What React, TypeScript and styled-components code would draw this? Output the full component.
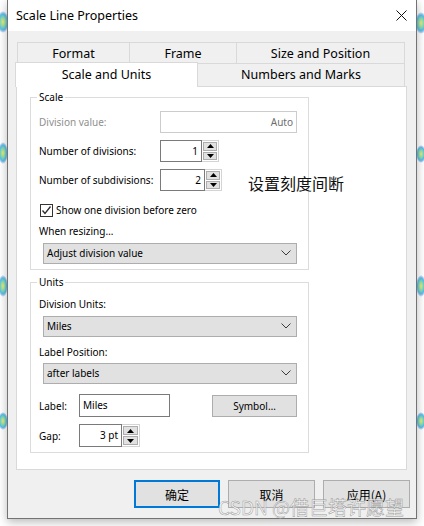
import React from "react";
import styled, { createGlobalStyle } from "styled-components";

const GlobalStyle = createGlobalStyle`
  *, *::before, *::after { box-sizing: border-box; }
  html, body { margin: 0; padding: 0; background: #ffffff; }
  body {
    width: 424px;
    height: 526px;
    overflow: hidden;
    font-family: "Noto Sans", "Noto Sans CJK SC", sans-serif;
    color: #000;
  }
`;

const Page = styled.div`
  position: relative;
  width: 424px;
  height: 526px;
  padding-left: 7px;
`;

const Backdrop = styled.svg`
  position: absolute;
  left: 0;
  top: 0;
  width: 424px;
  height: 526px;
`;

const Window = styled.div`
  position: relative;
  z-index: 1;
  width: 410px;
  height: 519px;
  border: 1px solid #737373;
  border-top: none;
  background: #f0f0f0;
  box-shadow: 0 3px 9px rgba(0, 0, 0, 0.28);
  display: flex;
  flex-direction: column;
`;

const TitleBar = styled.div`
  height: 31px;
  flex: none;
  background: #ffffff;
  display: flex;
  align-items: center;
  justify-content: space-between;
  padding: 0 9px 0 8px;
`;

const Title = styled.span`
  font-size: 12.5px;
  line-height: 16px;
  margin-top: 1px;
`;

const Body = styled.div`
  flex: 1;
  display: flex;
  flex-direction: column;
  padding: 11px 9px 10px 8px;
`;

const TabRow = styled.div<{ $front?: boolean }>`
  display: flex;
  align-items: flex-start;
  height: ${(p) => (p.$front ? 23 : 21)}px;
  padding-left: ${(p) => (p.$front ? 0 : 1)}px;
`;

const Tab = styled.div<{ $w: number; $selected?: boolean; $first?: boolean }>`
  position: relative;
  z-index: ${(p) => (p.$selected ? 2 : 0)};
  width: ${(p) => p.$w}px;
  height: ${(p) => (p.$selected ? 25 : p.$first === undefined ? 23 : 21)}px;
  margin: ${(p) => (p.$selected ? "-1px 0 -1px -1px" : p.$first ? "0" : "0 0 0 -1px")};
  border: 1px solid #d9d9d9;
  border-bottom: none;
  background: ${(p) => (p.$selected ? "#ffffff" : "#f0f0f0")};
  font-size: 12.5px;
  line-height: 16px;
  display: flex;
  align-items: center;
  justify-content: center;
  padding-top: ${(p) => (p.$first === undefined ? 0 : 1)}px;
  padding-bottom: ${(p) => (p.$selected ? 1 : 0)}px;
`;

const Panel = styled.div`
  position: relative;
  height: 384px;
  flex: none;
  border: 1px solid #d9d9d9;
  background: #ffffff;
  padding: 3px 0 0 13px;
  display: flex;
  flex-direction: column;
  gap: 5px;
`;

const Group = styled.fieldset`
  width: 279px;
  margin: 0;
  min-width: 0;
  padding: 0 10px 5px 8px;
  border: 1px solid #dcdcdc;
`;

const Legend = styled.legend`
  font-size: 10px;
  line-height: 14px;
  padding: 0 2px;
  margin-left: -2px;
`;

const GroupBody = styled.div`
  padding-top: 7px;
  display: flex;
  flex-direction: column;
`;

const Row = styled.div<{ $h: number; $mt?: number }>`
  height: ${(p) => p.$h}px;
  margin-top: ${(p) => p.$mt ?? 0}px;
  display: flex;
  align-items: center;
`;

const Label = styled.span<{ $w?: number; $disabled?: boolean }>`
  flex: none;
  width: ${(p) => (p.$w ? `${p.$w}px` : "auto")};
  font-size: 10px;
  line-height: 14px;
  color: ${(p) => (p.$disabled ? "#8f8f8f" : "#000")};
  white-space: nowrap;
`;

const TextBox = styled.div<{ $w: number; $h?: number; $disabled?: boolean; $align?: "left" | "right" }>`
  width: ${(p) => p.$w}px;
  height: ${(p) => p.$h ?? 22}px;
  flex: none;
  border: 1px solid ${(p) => (p.$disabled ? "#cccccc" : "#7a7a7a")};
  background: #ffffff;
  display: flex;
  align-items: center;
  justify-content: ${(p) => (p.$align === "left" ? "flex-start" : "flex-end")};
  padding: ${(p) => (p.$align === "left" ? "0 0 2px 3px" : "0 3px 1px 0")};
  font-size: 10px;
  color: ${(p) => (p.$disabled ? "#6d6d6d" : "#000")};
`;

const Spinner = styled.div<{ $h?: number; $w?: number }>`
  width: ${(p) => p.$w ?? 17}px;
  height: ${(p) => p.$h ?? 22}px;
  flex: none;
  border: 1px solid #d4d4d4;
  border-left: none;
  padding: 1px;
  display: flex;
  flex-direction: column;
  gap: 1px;
  background: #ffffff;
`;

const SpinButton = styled.div`
  flex: 1;
  border: 1px solid #adadad;
  background: #e1e1e1;
  display: flex;
  align-items: center;
  justify-content: center;
`;

const CheckRow = styled.label`
  display: flex;
  align-items: center;
  gap: 3px;
  margin-left: 1px;
  font-size: 10px;
  line-height: 14px;
`;

const CheckBox = styled.span`
  width: 13px;
  height: 13px;
  border: 1px solid #333333;
  background: #ffffff;
  display: flex;
  align-items: center;
  justify-content: center;
`;

const Select = styled.div<{ $mt?: number }>`
  width: 254px;
  height: 21px;
  margin: ${(p) => p.$mt ?? 0}px 0 0 4px;
  border: 1px solid #adadad;
  background: #e1e1e1;
  display: flex;
  align-items: center;
  justify-content: space-between;
  padding: 0 5px 1px 3px;
  font-size: 10px;
`;

const PushButton = styled.div<{ $w: number; $h: number; $default?: boolean; $cjk?: boolean; $push?: boolean }>`
  width: ${(p) => p.$w}px;
  height: ${(p) => p.$h}px;
  flex: none;
  margin: ${(p) => (p.$push ? "0 1px 0 auto" : "0")};
  border: ${(p) => (p.$default ? "2px solid #0078d7" : "1px solid #adadad")};
  background: #e1e1e1;
  display: flex;
  align-items: center;
  justify-content: center;
  font-size: ${(p) => (p.$cjk ? 12 : 10)}px;
  font-family: ${(p) =>
    p.$cjk ? `"Noto Sans CJK SC", "Noto Sans", sans-serif` : `"Noto Sans", sans-serif`};
`;

const ButtonBar = styled.div`
  display: flex;
  justify-content: flex-end;
  gap: 8px;
  margin: 10px -3px 0 0;
`;

const Annotation = styled.div`
  position: absolute;
  left: 231px;
  top: 86px;
  font-family: "Noto Sans CJK SC", sans-serif;
  font-size: 16px;
  line-height: 20px;
  color: #111;
`;

const Watermark = styled.div`
  position: absolute;
  z-index: 3;
  left: 218px;
  top: 495px;
  font-family: "Noto Sans CJK SC", sans-serif;
  font-size: 19px;
  line-height: 24px;
  color: rgba(255, 255, 255, 0.75);
  -webkit-text-stroke: 0.5px rgba(135, 135, 135, 0.85);
  white-space: nowrap;
`;

const CloseIcon = () => (
  <svg width="11" height="11" viewBox="0 0 11 11">
    <path d="M0.5 0.5 L10.5 10.5 M10.5 0.5 L0.5 10.5" stroke="#111" strokeWidth="1" fill="none" />
  </svg>
);

const Tri = ({ up }: { up?: boolean }) => (
  <svg width="7" height="4" viewBox="0 0 7 4">
    <polygon points={up ? "0,4 7,4 3.5,0" : "0,0 7,0 3.5,4"} fill="#000" />
  </svg>
);

const Chevron = () => (
  <svg width="10" height="6" viewBox="0 0 10 6">
    <polyline points="0.5,0.5 5,5 9.5,0.5" stroke="#3c3c3c" strokeWidth="1" fill="none" />
  </svg>
);

const Check = () => (
  <svg width="11" height="11" viewBox="0 0 11 11">
    <polyline points="1.5,5.5 4,8.5 9.5,1.5" stroke="#2b2b2b" strokeWidth="1.3" fill="none" />
  </svg>
);

const Spin = ({ h, w }: { h?: number; w?: number }) => (
  <Spinner $h={h} $w={w}>
    <SpinButton>
      <Tri up />
    </SpinButton>
    <SpinButton>
      <Tri />
    </SpinButton>
  </Spinner>
);

const blobs = [
  { x: 3, y: 22, rx: 6, ry: 11 },
  { x: 3, y: 153, rx: 5, ry: 11 },
  { x: 3, y: 286, rx: 5, ry: 11 },
  { x: 3, y: 421, rx: 5, ry: 9 },
  { x: 421, y: 23, rx: 6, ry: 11 },
  { x: 421, y: 154, rx: 5, ry: 9 },
  { x: 421, y: 286, rx: 5, ry: 11 },
  { x: 421, y: 421, rx: 5, ry: 9 },
];

export default function App() {
  return (
    <>
      <GlobalStyle />
      <Page>
        <Backdrop viewBox="0 0 424 526">
          <defs>
            <radialGradient id="blob">
              <stop offset="0%" stopColor="#e9ec5a" />
              <stop offset="40%" stopColor="#7fd6a0" />
              <stop offset="70%" stopColor="#35b4e6" />
              <stop offset="100%" stopColor="#3a6fd8" stopOpacity="0" />
            </radialGradient>
          </defs>
          {blobs.map((b, i) => (
            <ellipse key={i} cx={b.x} cy={b.y} rx={b.rx} ry={b.ry} fill="url(#blob)" opacity={0.85} />
          ))}
        </Backdrop>
        <Window>
          <TitleBar>
            <Title>Scale Line Properties</Title>
            <CloseIcon />
          </TitleBar>
          <Body>
            <TabRow>
              <Tab $w={113} $first>
                Format
              </Tab>
              <Tab $w={108} $first={false}>
                Frame
              </Tab>
              <Tab $w={169} $first={false}>
                Size and Position
              </Tab>
            </TabRow>
            <TabRow $front>
              <Tab $w={183} $selected>
                Scale and Units
              </Tab>
              <Tab $w={208}>Numbers and Marks</Tab>
            </TabRow>
            <Panel>
              <Group>
                <Legend>Scale</Legend>
                <GroupBody>
                  <Row $h={22}>
                    <Label $w={121} $disabled>
                      Division value:
                    </Label>
                    <TextBox $w={137} $disabled>
                      Auto
                    </TextBox>
                  </Row>
                  <Row $h={22} $mt={7}>
                    <Label $w={121}>Number of divisions:</Label>
                    <TextBox $w={42}>1</TextBox>
                    <Spin />
                  </Row>
                  <Row $h={22} $mt={7}>
                    <Label $w={121}>Number of subdivisions:</Label>
                    <TextBox $w={45}>2</TextBox>
                    <Spin />
                  </Row>
                  <Row $h={16} $mt={11}>
                    <CheckRow>
                      <CheckBox>
                        <Check />
                      </CheckBox>
                      Show one division before zero
                    </CheckRow>
                  </Row>
                  <Row $h={16} $mt={5}>
                    <Label>When resizing…</Label>
                  </Row>
                  <Select $mt={4}>
                    <span>Adjust division value</span>
                    <Chevron />
                  </Select>
                </GroupBody>
              </Group>
              <Group>
                <Legend>Units</Legend>
                <GroupBody>
                  <Row $h={16}>
                    <Label>Division Units:</Label>
                  </Row>
                  <Select $mt={4}>
                    <span>Miles</span>
                    <Chevron />
                  </Select>
                  <Row $h={16} $mt={7}>
                    <Label>Label Position:</Label>
                  </Row>
                  <Select $mt={3}>
                    <span>after labels</span>
                    <Chevron />
                  </Select>
                  <Row $h={23} $mt={10}>
                    <Label $w={40}>Label:</Label>
                    <TextBox $w={91} $h={23} $align="left">
                      Miles
                    </TextBox>
                    <PushButton $w={85} $h={22} $push>
                      Symbol…
                    </PushButton>
                  </Row>
                  <Row $h={23} $mt={7}>
                    <Label $w={40}>Gap:</Label>
                    <TextBox $w={43} $h={23}>
                      3 pt
                    </TextBox>
                    <Spin h={23} w={18} />
                  </Row>
                </GroupBody>
              </Group>
              <Annotation>设置刻度间断</Annotation>
            </Panel>
            <ButtonBar>
              <PushButton $w={86} $h={28} $default $cjk>
                确定
              </PushButton>
              <PushButton $w={87} $h={28} $cjk>
                取消
              </PushButton>
              <PushButton $w={87} $h={28} $cjk>
                应用(A)
              </PushButton>
            </ButtonBar>
          </Body>
        </Window>
        <Watermark>CSDN @借巨塔许愿望</Watermark>
      </Page>
    </>
  );
}
